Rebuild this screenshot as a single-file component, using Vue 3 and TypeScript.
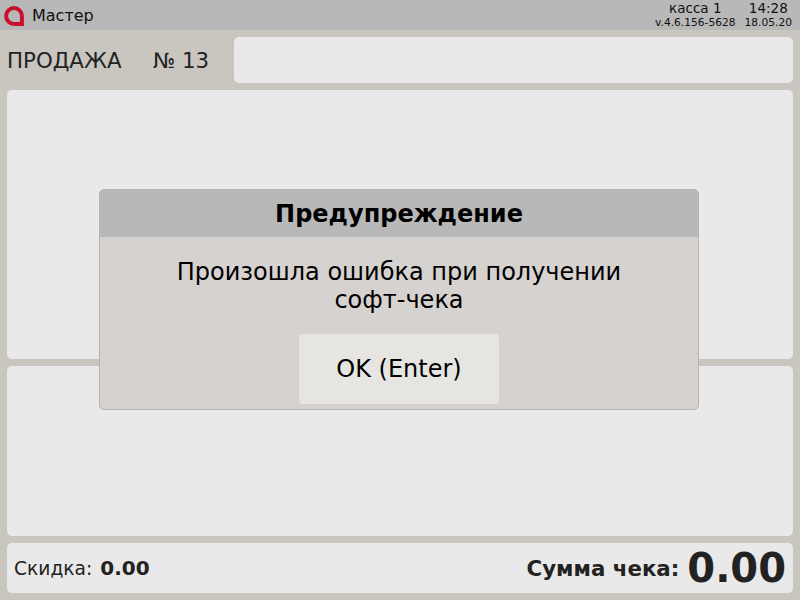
<template>
  <div class="screen">
    <header class="topbar">
      <svg class="logo" width="22" height="22" viewBox="0 0 22 22">
        <path d="M11 3.1 A7.9 7.9 0 1 0 11 18.9 L18.9 18.9 L18.9 11 A7.9 7.9 0 0 0 11 3.1 Z" fill="none" stroke="#c8102e" stroke-width="4" />
      </svg>
      <span class="user">Мастер</span>
      <div class="info">
        <div class="info-col kassa">
          <span class="big">касса 1</span>
          <span class="small">v.4.6.156-5628</span>
        </div>
        <div class="info-col clock">
          <span class="big">14:28</span>
          <span class="small">18.05.20</span>
        </div>
      </div>
    </header>

    <main class="content">
      <div class="sale-row">
        <span class="sale-title">ПРОДАЖА</span>
        <span class="sale-number">№ 13</span>
        <div class="panel sale-box"></div>
      </div>
      <div class="panel items"></div>
      <div class="panel details"></div>
      <div class="panel totals">
        <span class="discount-label">Скидка:</span>
        <span class="discount-value">0.00</span>
        <span class="sum-label">Сумма чека:</span>
        <span class="sum-value">0.00</span>
      </div>
    </main>

    <div class="dialog">
      <div class="dialog-head">Предупреждение</div>
      <div class="dialog-body">
        <p class="dialog-text">Произошла ошибка при получении<br />софт-чека</p>
        <button class="dialog-btn" type="button">OK (Enter)</button>
      </div>
    </div>
  </div>
</template>

<script setup lang="ts">
</script>

<style>
html,
body {
  margin: 0;
  padding: 0;
}
</style>

<style scoped>
.screen {
  position: relative;
  width: 800px;
  height: 600px;
  overflow: hidden;
  display: flex;
  flex-direction: column;
  background: #c9c6c0;
  color: #222;
  font-family: "DejaVu Sans", sans-serif;
}

.topbar {
  height: 30px;
  flex: none;
  display: flex;
  align-items: center;
  background: #b8b8b8;
  color: #111;
}

.logo {
  flex: none;
  margin: 1px 0 0 3px;
}

.user {
  margin-left: 7px;
  font-size: 16px;
}

.info {
  margin-left: auto;
  display: flex;
  padding-right: 8px;
  gap: 9px;
}

.info-col {
  display: flex;
  flex-direction: column;
  align-items: center;
}

.big {
  font-size: 13.5px;
  line-height: 16px;
}

.small {
  font-size: 10.67px;
  line-height: 14px;
}

.content {
  flex: 1;
  display: flex;
  flex-direction: column;
  gap: 7px;
  padding: 7px;
}

.panel {
  background: #e9e9e9;
  border-radius: 5px;
}

.sale-row {
  height: 46px;
  flex: none;
  display: flex;
  align-items: center;
  font-size: 21.33px;
}

.sale-title {
  width: 146px;
}

.sale-number {
  width: 81px;
}

.sale-box {
  flex: 1;
  height: 46px;
}

.items {
  height: 269px;
  flex: none;
}

.details {
  height: 170px;
  flex: none;
}

.totals {
  height: 50px;
  flex: none;
  display: flex;
  align-items: center;
  padding: 0 7px;
}

.discount-label {
  font-size: 18.67px;
}

.discount-value {
  margin-left: 8px;
  font-size: 20px;
  font-weight: bold;
}

.sum-label {
  margin-left: auto;
  font-size: 21.33px;
  font-weight: bold;
}

.sum-value {
  margin-left: 8px;
  font-size: 40px;
  font-weight: bold;
  line-height: 50px;
}

.dialog {
  position: absolute;
  left: 99px;
  top: 189px;
  width: 600px;
  height: 221px;
  box-sizing: border-box;
  display: flex;
  flex-direction: column;
  border: 1px solid #b4b4b4;
  border-radius: 5px;
  overflow: hidden;
  background: #d6d2cf;
  color: #000;
}

.dialog-head {
  height: 47px;
  flex: none;
  display: flex;
  align-items: center;
  justify-content: center;
  background: #b8b8b8;
  font-size: 24px;
  font-weight: bold;
}

.dialog-body {
  flex: 1;
  display: flex;
  flex-direction: column;
  align-items: center;
}

.dialog-text {
  margin: 21px 0 0;
  font-size: 24px;
  line-height: 28px;
  text-align: center;
}

.dialog-btn {
  margin-top: 20px;
  width: 200px;
  height: 70px;
  border: 0;
  border-radius: 4px;
  background: #e6e5e2;
  color: #000;
  font-family: inherit;
  font-size: 24px;
}
</style>
